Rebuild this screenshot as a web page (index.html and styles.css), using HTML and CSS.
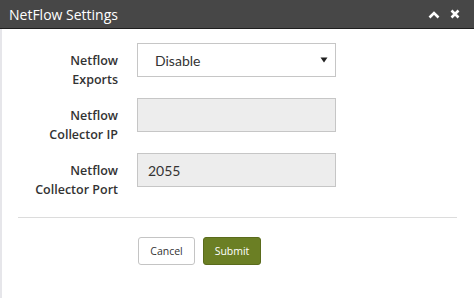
FILE: index.html
```html
<!DOCTYPE html>
<html lang="en">
<head>
  <meta charset="UTF-8" />
  <title>NetFlow Settings</title>
  <link rel="stylesheet" href="styles.css">
</head>
<body>

  <div class="janela">
    <div class="cabecalho">
      <span class="titulo">NetFlow Settings</span>
      <div class="ferramentas">
        <svg width="12" height="9" viewBox="0 0 12 9"><path d="M1.5 7.5 L6 3 L10.5 7.5" fill="none" stroke="#fff" stroke-width="2.6"/></svg>
        <svg width="10" height="10" viewBox="0 0 10 10"><path d="M1.5 1.5 L8.5 8.5 M8.5 1.5 L1.5 8.5" fill="none" stroke="#fff" stroke-width="2.6"/></svg>
      </div>
    </div>

    <div class="corpo">
      <div class="linha">
        <label>Netflow<br>Exports</label>
        <div class="campo seletor">
          <span>Disable</span>
          <svg width="8" height="6" viewBox="0 0 8 6"><path d="M0.5 0.5 H7.5 L4 5.5 Z" fill="#222"/></svg>
        </div>
      </div>

      <div class="linha">
        <label>Netflow<br>Collector IP</label>
        <div class="campo cinza"></div>
      </div>

      <div class="linha">
        <label>Netflow<br>Collector Port</label>
        <div class="campo cinza">2055</div>
      </div>

      <hr>

      <div class="acoes">
        <button class="cancelar">Cancel</button>
        <button class="enviar">Submit</button>
      </div>
    </div>
  </div>

</body>
</html>
```

FILE: styles.css
```css
body {
  margin: 0;
  font-family: "Open Sans", Arial, sans-serif;
  background: #fff;
  color: #333;
}
.janela {
  width: 474px;
  height: 298px;
  border-left: 2px solid #e6e6ea;
  box-sizing: border-box;
}
.cabecalho {
  height: 28px;
  background: #474747;
  border-bottom: 1px solid #1e1e1e;
  display: flex;
  align-items: center;
  justify-content: space-between;
  padding: 0 14px 0 9px;
  margin-left: -2px;
}
.titulo {
  color: #fff;
  font-size: 14px;
}
.ferramentas {
  display: flex;
  align-items: center;
  gap: 10px;
}
.corpo {
  padding-top: 14px;
}
.linha {
  display: flex;
  margin-bottom: 9px;
}
.linha label {
  width: 116px;
  text-align: right;
  font-size: 12.5px;
  font-weight: 600;
  line-height: 19px;
  padding-top: 8px;
  height: 38px;
  margin-right: 19px;
}
.campo {
  width: 199px;
  height: 34px;
  box-sizing: border-box;
  border: 1px solid #c6c6c6;
  font-family: Lato, "Open Sans", sans-serif;
  font-size: 14px;
  display: flex;
  align-items: center;
  padding-left: 10px;
}
.seletor {
  background: #fff;
  padding-left: 17px;
  padding-right: 7px;
  justify-content: space-between;
}
.cinza {
  background: #ededed;
}
hr {
  border: none;
  border-top: 1px solid #dcdcdc;
  margin: 18px 17px 0 16px;
}
.acoes {
  display: flex;
  gap: 8px;
  margin: 19px 0 0 136px;
}
button {
  font-family: "Open Sans", Arial, sans-serif;
  font-size: 10.5px;
  height: 28px;
  border-radius: 3px;
  cursor: pointer;
}
.cancelar {
  width: 57px;
  background: #fff;
  border: 1px solid #c4c4c4;
  color: #333;
}
.enviar {
  width: 58px;
  background: #6b7f24;
  border: 1px solid #5a6b1c;
  color: #fff;
}
```
